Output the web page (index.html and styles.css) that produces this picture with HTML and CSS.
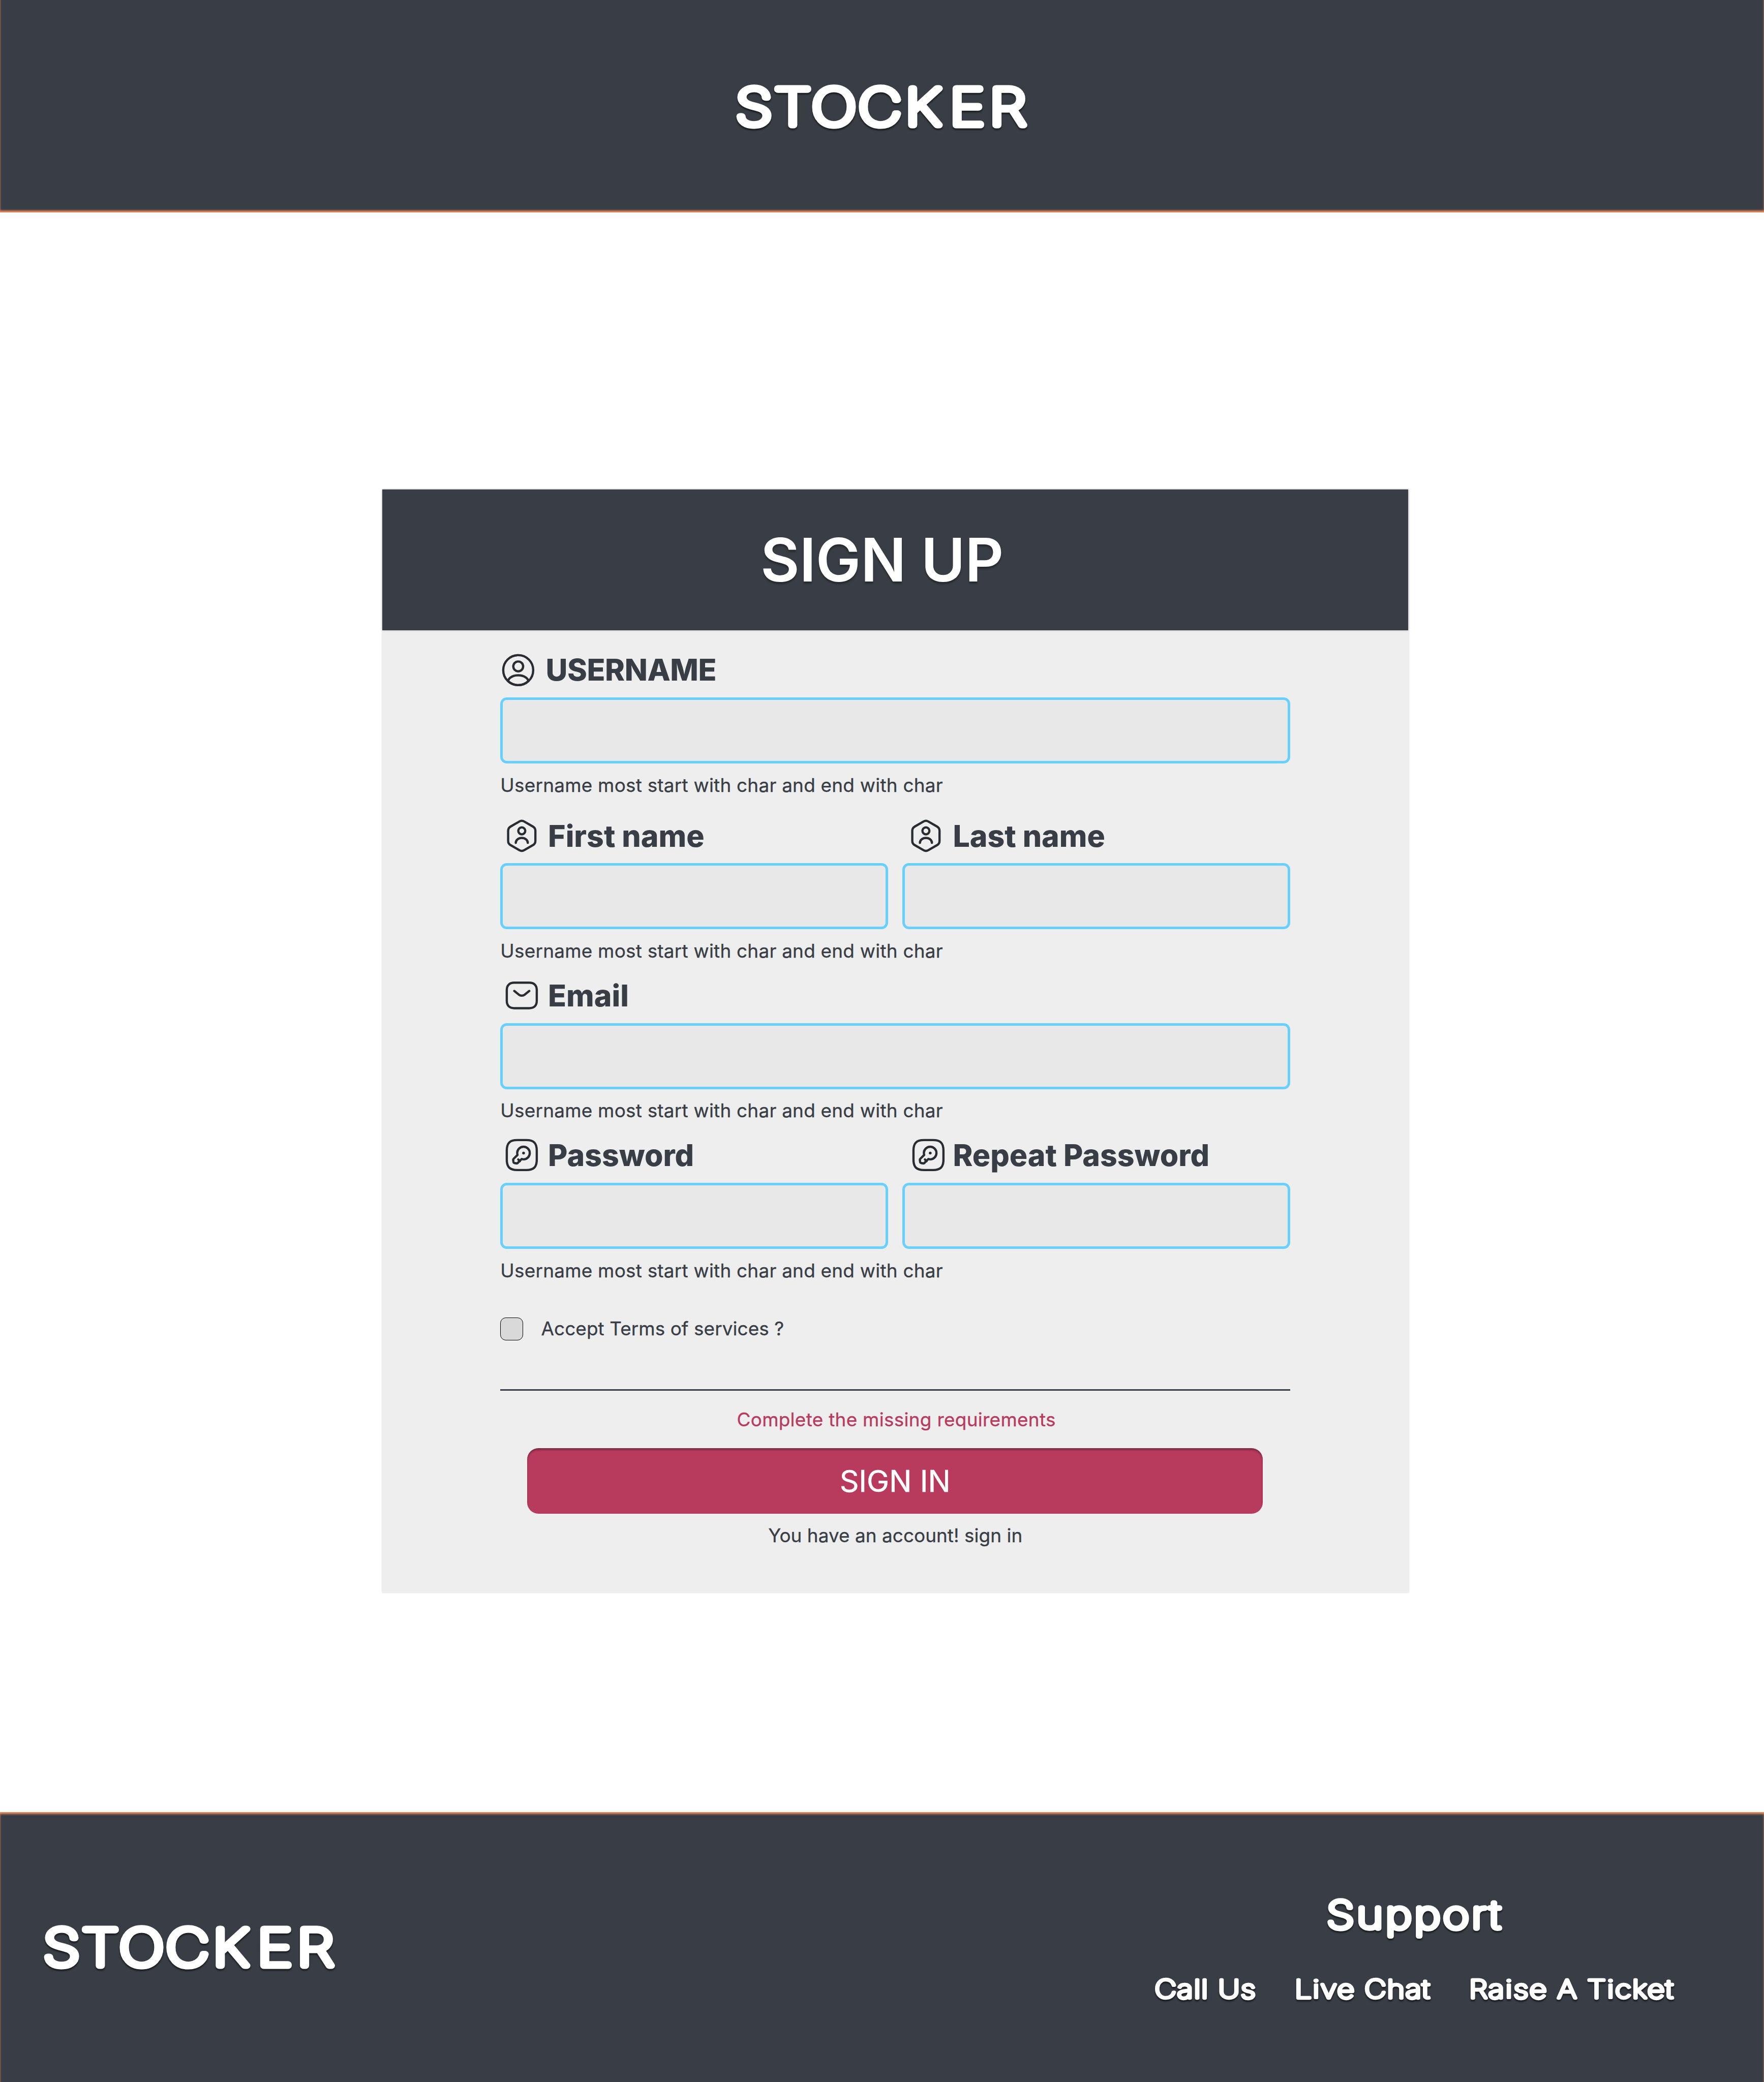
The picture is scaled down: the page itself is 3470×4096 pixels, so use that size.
FILE: index.html
```html
<!DOCTYPE html>
<html lang="en">
<head>
<meta charset="utf-8">
<title>Stocker – Sign up</title>
<link rel="stylesheet" href="styles.css">
</head>
<body>
<svg class="sprite" aria-hidden="true">
  <symbol id="i-profile" viewBox="0 0 24 24">
    <circle cx="12" cy="12" r="10"/>
    <circle cx="12" cy="9.5" r="3.28"/>
    <path d="M18.74 19.38A9.93 9.93 0 0 1 12 22c-2.6 0-4.96-.99-6.74-2.62.1-.94.7-1.86 1.77-2.58 2.74-1.82 7.22-1.82 9.94 0 1.07.72 1.67 1.64 1.77 2.58Z"/>
  </symbol>
  <symbol id="i-user" viewBox="0 0 24 24">
    <path d="M21.08 8.58v6.84c0 1.12-.6 2.16-1.57 2.73l-5.94 3.43c-.97.56-2.17.56-3.15 0l-5.94-3.43a3.15 3.15 0 0 1-1.57-2.73V8.58c0-1.12.6-2.16 1.57-2.73l5.94-3.43c.97-.56 2.17-.56 3.15 0l5.94 3.43c.97.57 1.57 1.6 1.57 2.73Z"/>
    <circle cx="12" cy="8.67" r="2.33"/>
    <path d="M16 16.66c0-1.8-1.79-3.26-4-3.26s-4 1.46-4 3.26"/>
  </symbol>
  <symbol id="i-mail" viewBox="0 0 24 24">
    <path d="M17 20.5H7c-3 0-5-1.5-5-5v-7c0-3.5 2-5 5-5h10c3 0 5 1.5 5 5v7c0 3.5-2 5-5 5Z"/>
    <path d="m17 9-3.13 2.5c-1.03.82-2.72.82-3.75 0L7 9"/>
  </symbol>
  <symbol id="i-key" viewBox="0 0 24 24">
    <path d="M9 22h6c5 0 7-2 7-7V9c0-5-2-7-7-7H9C4 2 2 4 2 9v6c0 5 2 7 7 7Z"/>
    <g transform="translate(13.15 10.65) scale(.92) translate(-13.06 -10.39)" stroke-width="1.63">
      <path d="M16.28 13.61c-1.24 1.24-3.02 1.62-4.58 1.13l-2.83 2.83c-.2.21-.61.34-.9.3l-1.31-.18c-.43-.06-.83-.46-.9-.9l-.17-1.3c-.04-.29.1-.7.3-.91l2.83-2.83c-.48-1.57-.1-3.35 1.13-4.58 1.77-1.77 4.65-1.77 6.43 0 1.77 1.77 1.77 4.66 0 6.44Z"/>
      <path d="m10.45 16.28-1.19-1.19"/>
      <path d="M13.1 10.45h.01" stroke-width="2"/>
    </g>
  </symbol>
</svg>

<header class="topbar">
  <svg class="rounded logo" viewBox="0 0 620 130" role="img" aria-label="STOCKER">
    <text transform="scale(1.18 1)" x="-1.6 68.2 135.9 220.2 305 385.6 457.4" y="103.15">STOCKER</text>
  </svg>
</header>

<main class="page">
  <form class="card">
    <div class="card-head"><h1>SIGN UP</h1></div>
    <div class="card-body">
      <div class="group">
        <div class="field">
          <label class="label label-username"><svg class="icon"><use href="#i-profile"/></svg>USERNAME</label>
          <input class="box" type="text">
        </div>
        <p class="hint">Username most start with char and end with char</p>
      </div>
      <div class="group group-names">
        <div class="pair">
          <div class="field">
            <label class="label"><svg class="icon"><use href="#i-user"/></svg>First name</label>
            <input class="box" type="text">
          </div>
          <div class="field">
            <label class="label label-last"><svg class="icon"><use href="#i-user"/></svg>Last name</label>
            <input class="box" type="text">
          </div>
        </div>
        <p class="hint">Username most start with char and end with char</p>
      </div>
      <div class="group group-email">
        <div class="field">
          <label class="label"><svg class="icon"><use href="#i-mail"/></svg>Email</label>
          <input class="box" type="email">
        </div>
        <p class="hint">Username most start with char and end with char</p>
      </div>
      <div class="group group-password">
        <div class="pair">
          <div class="field">
            <label class="label"><svg class="icon"><use href="#i-key"/></svg>Password</label>
            <input class="box" type="password">
          </div>
          <div class="field">
            <label class="label label-repeat"><svg class="icon"><use href="#i-key"/></svg>Repeat Password</label>
            <input class="box" type="password">
          </div>
        </div>
        <p class="hint">Username most start with char and end with char</p>
      </div>
      <label class="terms"><input class="check" type="checkbox">Accept Terms of services ?</label>
      <hr class="rule">
      <p class="error">Complete the missing requirements</p>
      <button class="submit" type="button">SIGN IN</button>
      <p class="account">You have an account! sign in</p>
    </div>
  </form>
</main>

<footer class="footer">
  <svg class="rounded logo" viewBox="0 0 620 130" role="img" aria-label="STOCKER">
    <text transform="scale(1.18 1)" x="-1.6 68.2 135.9 220.2 305 385.6 457.4" y="103.15">STOCKER</text>
  </svg>
  <nav class="support">
    <svg class="rounded support-title" viewBox="0 0 374 110">
      <text transform="scale(1.18 1)" x="-1" y="74.85" textLength="314">Support</text>
    </svg>
    <div class="links">
      <svg class="rounded link link-call" viewBox="0 0 214 70">
        <text transform="scale(1.18 1)" x="-1.4" y="46.6" textLength="182.2">Call Us</text>
      </svg>
      <svg class="rounded link link-chat" viewBox="0 0 287 70">
        <text transform="scale(1.18 1)" x="-2.7" y="46.6" textLength="243.4">L<tspan class="dotted">i</tspan>ve Chat</text>
      </svg>
      <svg class="rounded link link-ticket" viewBox="0 0 436 70">
        <text transform="scale(1.18 1)" x="-2.7" y="46.6" textLength="368.6">Ra<tspan class="dotted">i</tspan>se A T<tspan class="dotted">i</tspan>cket</text>
      </svg>
    </div>
  </nav>
</footer>
</body>
</html>
```
FILE: styles.css
```css
/* 1rem = 10 design pixels */
html { font-size: 9.21647px; }
*, *::before, *::after { box-sizing: border-box; }
body {
  margin: 0;
  height: 444.4rem;
  display: flex;
  flex-direction: column;
  overflow: hidden;
  background: #fff;
  color: #393e46;
  font-family: Inter, "Liberation Sans", sans-serif;
}
h1, p { margin: 0; }
.sprite { display: none; }

/* rounded display lettering */
.rounded { display: block; flex: none; overflow: visible; filter: drop-shadow(0 .4rem .2rem rgba(0, 0, 0, .6)); }
.rounded text {
  font-family: Inter, sans-serif;
  font-weight: 100;
  font-size: 107.7px;
  fill: #fff;
  stroke: #fff;
  stroke-width: 14.2px;
  stroke-linejoin: round;
  stroke-linecap: round;
}
.logo { width: 62rem; height: 13rem; }

.topbar {
  flex: none;
  height: 45.4rem;
  padding-top: 16.4rem;
  display: flex;
  justify-content: center;
  align-items: flex-start;
  background: #393e46;
  box-shadow: inset 0 -.4rem .4rem #f08a5d;
}

.page { flex: 1; padding: 59.1rem 0 0 81.6rem; }
.card {
  width: 219.1rem;
  height: 235.4rem;
  background: #eee;
  box-shadow: 0 0 .3rem rgba(0, 0, 0, .2);
}
.card-head {
  width: 219rem;
  height: 30rem;
  padding: .1rem 5.7rem 0 0;
  display: flex;
  align-items: center;
  justify-content: center;
  background: #393e46;
  box-shadow: 0 0 .4rem rgba(0, 0, 0, .25);
}
.card-head h1 {
  color: #fff;
  font-size: 12.8rem;
  font-weight: 600;
  line-height: 1;
  letter-spacing: -.03rem;
  text-shadow: 0 .4rem .4rem rgba(0, 0, 0, .35);
}
.card-body {
  padding: 4.5rem 25.3rem 0 25.2rem;
  display: flex;
  flex-direction: column;
}
.group { display: flex; flex-direction: column; gap: 2.25rem; }
.group-names { margin-top: 4.35rem; }
.group-email { margin-top: 3.05rem; }
.group-password { margin-top: 3.05rem; }
.pair { display: grid; grid-template-columns: 1fr 1fr; gap: 3rem; }
.field { display: flex; flex-direction: column; gap: 1.9rem; }
.label {
  height: 8rem;
  padding-left: .7rem;
  display: flex;
  align-items: center;
  gap: 1.8rem;
  font-size: 6.4rem;
  font-weight: 800;
  line-height: 1;
  white-space: nowrap;
}
.label-username { padding-left: 0; gap: 2rem; letter-spacing: -.045rem; }
.label-last { padding-left: 1.2rem; gap: 1.9rem; }
.label-repeat { padding-left: 1.7rem; gap: 1.4rem; }
.icon {
  flex: none;
  width: 7.68rem;
  height: 7.68rem;
  fill: none;
  stroke: #292d32;
  stroke-width: 1.5;
  stroke-linecap: round;
  stroke-linejoin: round;
}
.box {
  display: block;
  width: 100%;
  height: 14.1rem;
  margin: 0;
  border: 5px solid #68d0ff;
  border-radius: 1.4rem;
  background: #e8e8e8;
}
.hint, .error, .account, .terms { font-size: 4rem; line-height: 4.8rem; -webkit-text-stroke: .04rem currentColor; }
.hint { letter-spacing: .028rem; }
.terms {
  margin-top: 7.65rem;
  display: flex;
  align-items: center;
  gap: 3.9rem;
  letter-spacing: .01rem;
}
.check {
  appearance: none;
  width: 4.8rem;
  height: 4.8rem;
  margin: 0;
  border: 1px solid #000;
  border-radius: 1.2rem;
  background: #d9d9d9;
}
.rule { width: 100%; height: .3rem; margin: 10.5rem 0 0; border: 0; background: #393e46; }
.error { margin-top: 3.8rem; padding-left: .4rem; text-align: center; color: #b83b5e; letter-spacing: .034rem; }
.submit {
  width: 157rem;
  height: 14.1rem;
  margin: 3.6rem 0 0 5.75rem;
  padding: 0;
  border: 0;
  border-radius: 2.4rem;
  background: #b83b5e;
  box-shadow: inset 0 .4rem .4rem rgba(0, 0, 0, .3);
  color: #fff;
  font: 400 6.4rem/1 Inter, sans-serif;
  letter-spacing: -.01rem;
  -webkit-text-stroke: .06rem currentColor;
}
.account { margin-top: 2.2rem; text-align: center; letter-spacing: .007rem; }

.footer {
  flex: none;
  height: 57.6rem;
  padding: 0 19.05rem 0 9.47rem;
  display: flex;
  justify-content: space-between;
  align-items: flex-start;
  background: #393e46;
  box-shadow: inset 0 .4rem .4rem #f08a5d;
}
.footer .logo { margin-top: 22.5rem; }
.support { margin-top: 17.35rem; display: flex; flex-direction: column; align-items: center; gap: 6.67rem; }
.support-title { width: 37.4rem; height: 11rem; }
.support-title text { font-size: 80.8px; stroke-width: 10.3px; }
.links { display: flex; }
.link { height: 7rem; }
.link text { font-size: 53.85px; stroke-width: 6.85px; }
.link .dotted { font-weight: 300; stroke-width: 4.4px; }
.link-call { width: 21.4rem; margin-right: 8.7rem; }
.link-chat { width: 28.7rem; margin-right: 8.45rem; }
.link-ticket { width: 43.6rem; }
```
